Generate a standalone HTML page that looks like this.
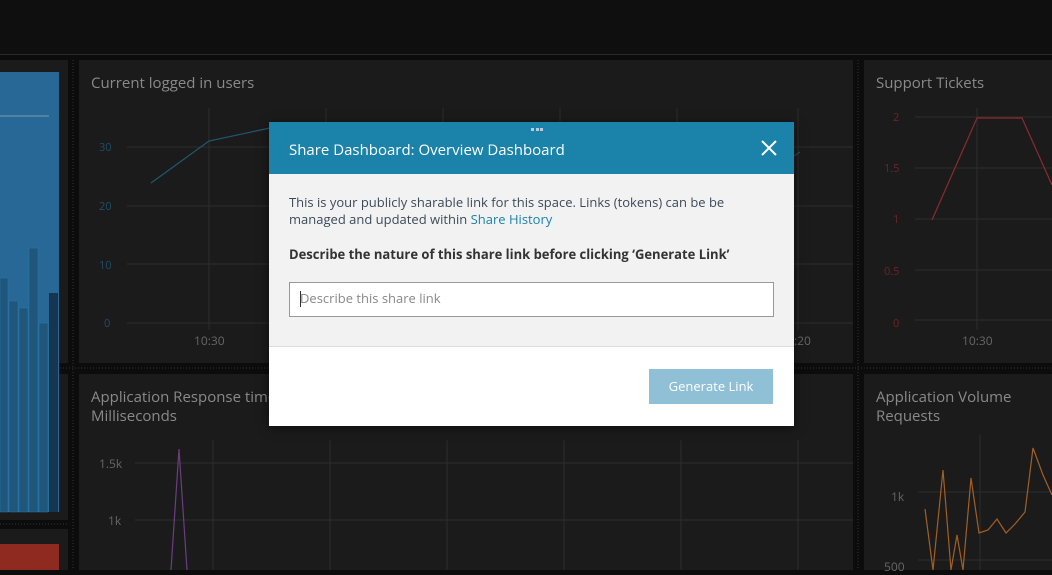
<!DOCTYPE html>
<html><head><meta charset="utf-8"><style>
*{margin:0;padding:0;box-sizing:border-box}
body{width:1052px;height:570px;overflow:hidden;background:#0c0c0c;font-family:"Open Sans","Liberation Sans",sans-serif;position:relative}
.t{position:absolute;color:#8a8a8a;font-size:15px}
.modal{position:absolute;left:269px;top:122px;width:525px;height:304px;background:#fff;box-shadow:0 2px 10px rgba(0,0,0,.5)}
.hd{height:52px;background:#1b82aa;color:#fff;font-size:15px;padding:18px 20px}
.bd{height:173px;background:#f2f2f2;border-bottom:1px solid #ddd;padding:20px 20px;color:#3b4a5a;font-size:13px;line-height:17px}
</style></head><body>
<svg width="1052" height="570" style="position:absolute;left:0;top:0">
<rect x="0" y="0" width="1052" height="54" fill="#0f0f0f"/>
<rect x="0" y="54" width="1052" height="1" fill="#2a2a2a"/>
<rect x="0" y="60" width="68" height="303" fill="#1b1b1b"/>
<rect x="79" y="60" width="774" height="303" fill="#1b1b1b"/>
<rect x="864" y="60" width="188" height="303" fill="#1b1b1b"/>
<rect x="0" y="374" width="68" height="146" fill="#1b1b1b"/>
<rect x="0" y="529" width="68" height="41" fill="#1b1b1b"/>
<rect x="79" y="374" width="774" height="196" fill="#1b1b1b"/>
<rect x="864" y="374" width="188" height="196" fill="#1b1b1b"/>
<line x1="73" y1="60" x2="73" y2="570" stroke="#333" stroke-dasharray="1 2"/>
<line x1="858" y1="60" x2="858" y2="570" stroke="#333" stroke-dasharray="1 2"/>
<line x1="0" y1="368" x2="1052" y2="368" stroke="#333" stroke-dasharray="1 2"/>
<line x1="0" y1="524" x2="68" y2="524" stroke="#333" stroke-dasharray="1 2"/>
<rect x="0" y="72" width="59" height="440" fill="#276896"/>
<line x1="0" y1="116" x2="49" y2="116" stroke="#7a9cb5"/>
<g fill="#1f5679" stroke="#2e7bb0" stroke-width="0.5">
<rect x="0" y="278" width="8" height="234"/><rect x="9" y="301" width="9" height="211"/><rect x="19" y="308" width="9" height="204"/><rect x="29" y="248" width="9" height="264"/><rect x="39" y="323" width="9" height="189"/></g>
<rect x="49" y="293" width="9" height="219" fill="#163550"/>
<rect x="0" y="544" width="59" height="26" fill="#8f2a20"/>
<g stroke="#2c2c2c">
<line x1="127" y1="147" x2="853" y2="147"/><line x1="127" y1="206" x2="853" y2="206"/><line x1="127" y1="264" x2="853" y2="264"/><line x1="127" y1="323" x2="853" y2="323"/>
<line x1="209" y1="108" x2="209" y2="330"/><line x1="326" y1="108" x2="326" y2="330"/><line x1="443" y1="108" x2="443" y2="330"/><line x1="560" y1="108" x2="560" y2="330"/><line x1="677" y1="108" x2="677" y2="330"/><line x1="798" y1="108" x2="798" y2="330"/>
<line x1="135" y1="463" x2="853" y2="463"/><line x1="135" y1="520" x2="853" y2="520"/>
<line x1="213" y1="440" x2="213" y2="570"/><line x1="330" y1="440" x2="330" y2="570"/><line x1="447" y1="440" x2="447" y2="570"/><line x1="564" y1="440" x2="564" y2="570"/><line x1="681" y1="440" x2="681" y2="570"/><line x1="798" y1="440" x2="798" y2="570"/>
<line x1="915" y1="117" x2="1052" y2="117"/><line x1="915" y1="168" x2="1052" y2="168"/><line x1="915" y1="219" x2="1052" y2="219"/><line x1="915" y1="270" x2="1052" y2="270"/><line x1="915" y1="320" x2="1052" y2="320"/>
<line x1="977" y1="108" x2="977" y2="330"/>
<line x1="918" y1="492" x2="1052" y2="492"/><line x1="918" y1="560" x2="1052" y2="560"/><line x1="980" y1="435" x2="980" y2="570"/>
</g>
<polyline points="151,183 209,141 270,128" fill="none" stroke="#1e5a72" stroke-width="1.2"/>
<polyline points="794,156 800,152" fill="none" stroke="#1e5a72"/>
<polyline points="171,570 179,449 187,570" fill="none" stroke="#6c3d80" stroke-width="1.2"/>
<polyline points="932,220 977,118 1022,118 1052,185" fill="none" stroke="#8a2b30" stroke-width="1.2"/>
<polyline points="925,509 933,570 943,470 951,570 957,535 963,570 971,478 979,533 988,530 997,519 1006,533 1015,524 1025,512 1033,448 1043,475 1052,495" fill="none" stroke="#a35f25" stroke-width="1.2"/>
</svg>
<div class="t" style="left:91px;top:73px">Current logged in users</div>
<div class="t" style="left:876px;top:73px">Support Tickets</div>
<div class="t" style="left:91px;top:387px">Application Response time</div>
<div class="t" style="left:91px;top:406px">Milliseconds</div>
<div class="t" style="left:876px;top:387px">Application Volume</div>
<div class="t" style="left:876px;top:406px">Requests</div>
<div style="position:absolute;font-size:11px;color:#1f4e66">
<div style="position:absolute;left:99px;top:140px">30</div><div style="position:absolute;left:99px;top:199px">20</div><div style="position:absolute;left:99px;top:258px">10</div><div style="position:absolute;left:104px;top:316px">0</div></div>
<div style="position:absolute;font-size:11px;color:#6e2328">
<div style="position:absolute;left:893px;top:110px">2</div><div style="position:absolute;left:884px;top:161px">1.5</div><div style="position:absolute;left:893px;top:212px">1</div><div style="position:absolute;left:884px;top:264px">0.5</div><div style="position:absolute;left:893px;top:316px">0</div></div>
<div style="position:absolute;font-size:12px;color:#666">
<div style="position:absolute;left:194px;top:332px">10:30</div><div style="position:absolute;left:962px;top:332px">10:30</div><div style="position:absolute;left:794px;top:332px">:20</div>
<div style="position:absolute;left:99px;top:455px">1.5k</div><div style="position:absolute;left:108px;top:512px">1k</div>
<div style="position:absolute;left:891px;top:488px">1k</div><div style="position:absolute;left:884px;top:558px">500</div></div>
<div class="modal">
<div style="position:absolute;left:262px;top:6px;width:12px;height:3px;border-left:3px dotted #bcd;border-right:3px dotted #bcd;background:linear-gradient(#bcd,#bcd) center/3px 3px no-repeat"></div>
<div class="hd">Share Dashboard: Overview Dashboard
<svg width="16" height="16" style="position:absolute;right:17px;top:18px"><path d="M1 1L15 15M15 1L1 15" stroke="#fff" stroke-width="2"/></svg></div>
<div class="bd">This is your publicly sharable link for this space. Links (tokens) can be be managed and updated within <span style="color:#1b82aa">Share History</span>
<div style="font-weight:bold;color:#333;margin-top:18px">Describe the nature of this share link before clicking ‘Generate Link’</div>
<div style="margin-top:19px;height:35px;background:#fff;border:1px solid #999;padding:7px 10px;color:#888;font-size:13px;position:relative"><span style="position:absolute;left:10px;top:8px;width:1px;height:16px;background:#333"></span>Describe this share link</div>
</div>
<div style="position:absolute;left:380px;top:247px;width:124px;height:35px;background:#8fc0d5;color:#fff;font-size:13px;text-align:center;line-height:35px">Generate Link</div>
</div>
</body></html>
